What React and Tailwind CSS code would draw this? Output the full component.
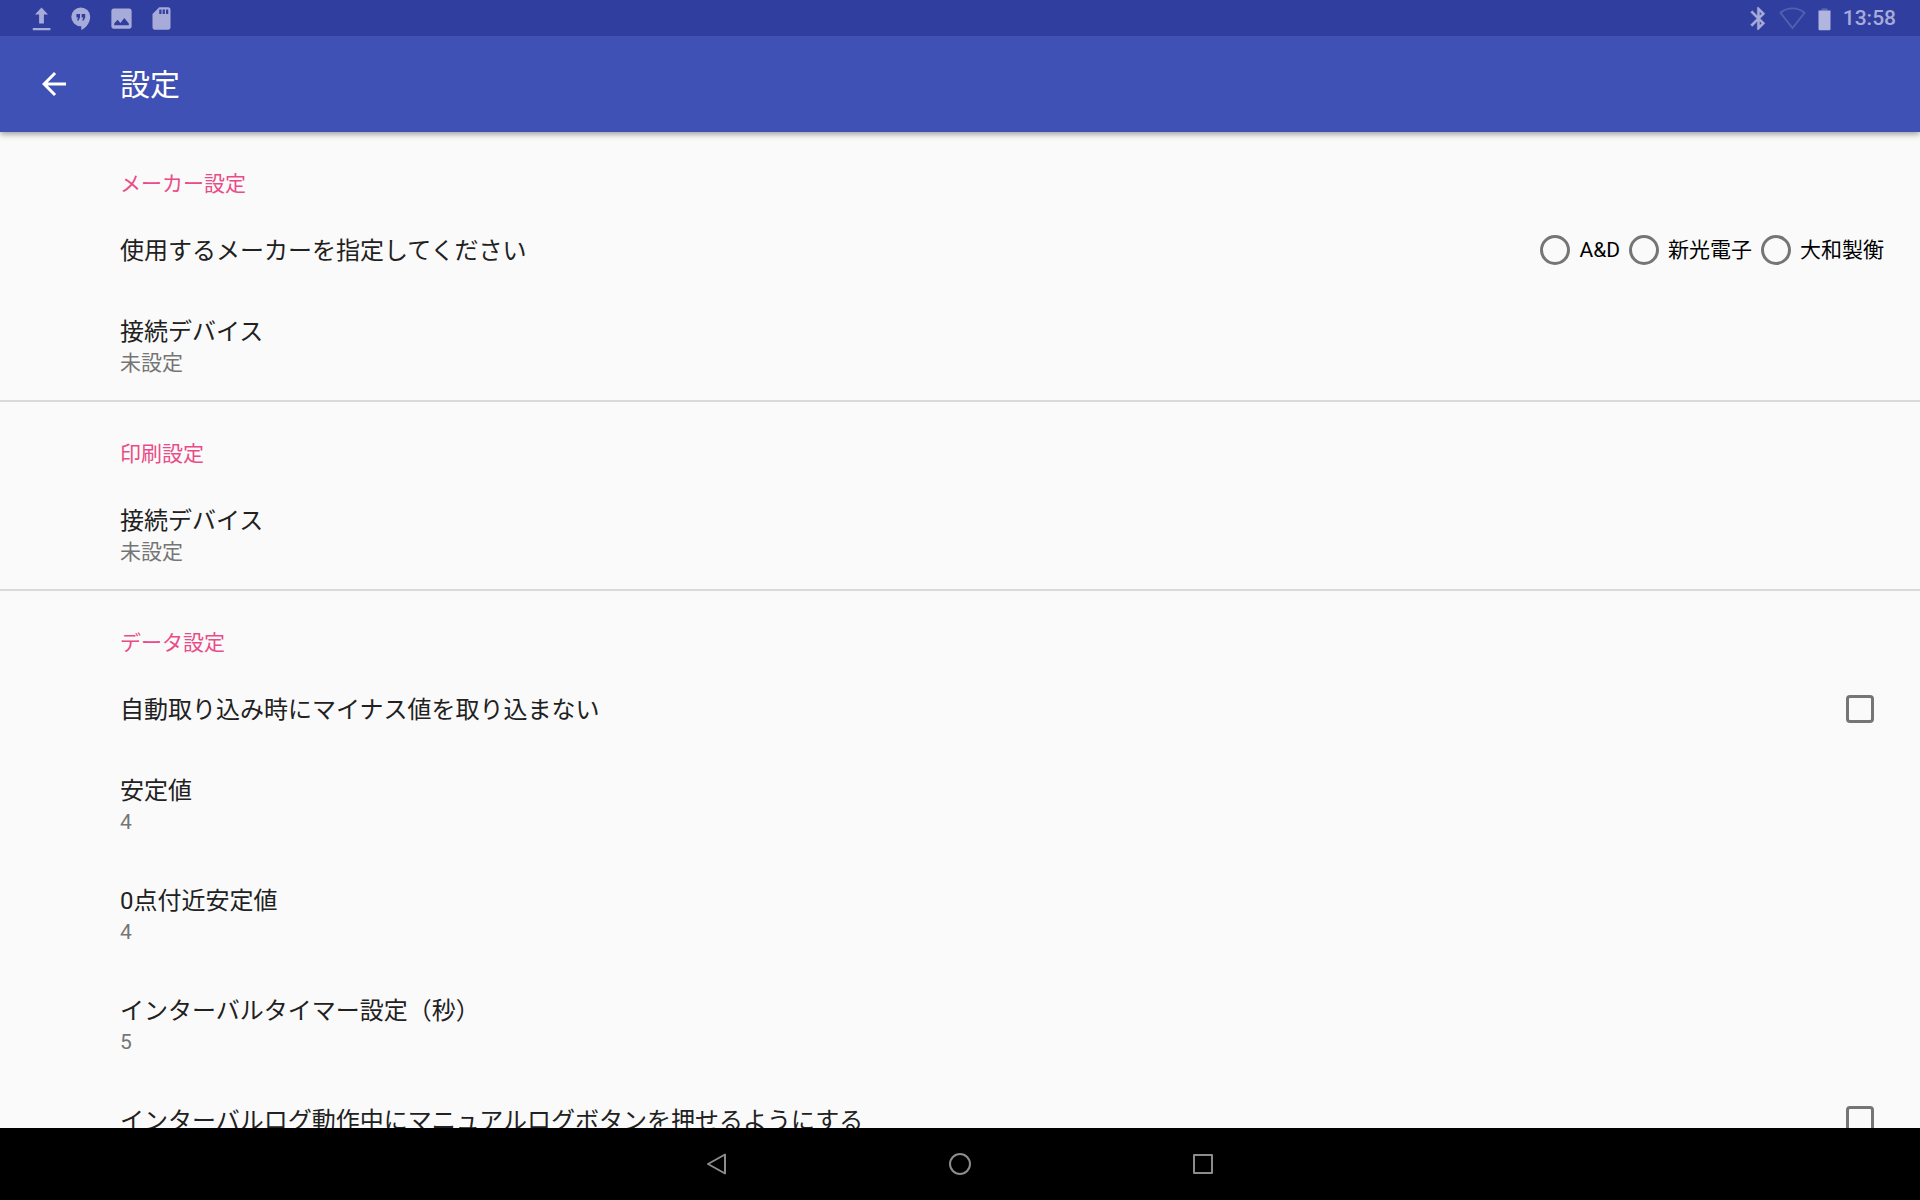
import { useState } from "react";

const UploadIcon = () => (
  <svg viewBox="0 0 27 27" className="size-[27px]" fill="currentColor">
    <path d="M13.5 2.5 20 9.4h-4.1v9.1h-4.8V9.4H7zM4.8 23h17.6v2.3H4.8z" />
  </svg>
);
const HangoutsIcon = () => (
  <svg viewBox="0 0 27 27" className="size-[27px]" fill="currentColor" fillRule="evenodd">
    <path d="M12.700 2.400a9.400 9.400 0 0 0 0 18.800h.6v3.900c5.200-2.500 8.900-7.900 8.900-13.300a9.400 9.400 0 0 0-9.500-9.400zM8.400 8.900h3.600v3.700l-1.500 3H9l1.100-3H8.400zm5.200 0h3.600v3.700l-1.500 3h-1.500l1.100-3h-1.700z" />
  </svg>
);
const ImageIcon = () => (
  <svg viewBox="0 0 24 24" className="size-[27px]" fill="currentColor">
    <path d="M21 19V5c0-1.100-.9-2-2-2H5c-1.100 0-2 .9-2 2v14c0 1.100.9 2 2 2h14c1.100 0 2-.9 2-2zM5.500 18v-1.500l3-3.500 2.500 3 3.500-4.500 4 5V18z" />
  </svg>
);
const SdCardIcon = () => (
  <svg viewBox="0 0 24 24" className="size-[27px]" fill="currentColor">
    <path d="M18 2h-8L4 8v12c0 1.100.9 2 2 2h12c1.100 0 2-.9 2-2V4c0-1.100-.9-2-2-2zm-6 6h-2V4h2v4zm3 0h-2V4h2v4zm3 0h-2V4h2v4z" />
  </svg>
);
const BluetoothIcon = () => (
  <svg viewBox="0 0 24 24" className="size-[27px]" fill="currentColor" stroke="currentColor" strokeWidth="0.400">
    <path d="M17.710 7.710L12 2h-1v7.590L6.410 5 5 6.410 10.590 12 5 17.590 6.410 19 11 14.410V22h1l5.710-5.710-4.300-4.290 4.300-4.290zM13 5.830l1.880 1.880L13 9.590V5.830zm1.880 10.460L13 18.170v-3.760l1.880 1.880z" />
  </svg>
);
const WifiIcon = () => (
  <svg viewBox="0 0 27 27" className="size-[27px]" fill="none" stroke="currentColor" strokeWidth="1.800">
    <path d="M1.500 7.800C8.500 1.900 18.500 1.900 25.500 7.800L13.500 23z" />
  </svg>
);
const BatteryIcon = () => (
  <svg viewBox="0 0 27 27" className="size-[27px]" fill="currentColor">
    <path d="M10.500 3.500h6v2h-6z" opacity="0.350" />
    <path d="M7.500 5.500h12v18.500a1.200 1.200 0 0 1-1.200 1.200H8.700a1.200 1.200 0 0 1-1.200-1.200z" />
  </svg>
);

function StatusBar() {
  return (
    <div className="z-20 flex h-9 shrink-0 items-center justify-between bg-[#303f9f] pr-6 pl-7 text-[#a6abd9]">
      <div className="flex gap-[13px]">
        <UploadIcon />
        <HangoutsIcon />
        <ImageIcon />
        <SdCardIcon />
      </div>
      <div className="flex items-center">
        <BluetoothIcon />
        <span className="ml-[7px] text-[#5260af]">
          <WifiIcon />
        </span>
        <span className="ml-[5px] text-[#b1b6de]">
          <BatteryIcon />
        </span>
        <span className="ml-[5px] text-[21px] leading-9 font-medium">13:58</span>
      </div>
    </div>
  );
}

function AppBar() {
  return (
    <header className="z-10 flex h-24 shrink-0 items-center bg-[#3f51b5] pl-9 text-white shadow-[0_2px_6px_rgba(0,0,0,0.4)]">
      <button type="button" aria-label="戻る" className="w-[84px]">
        <svg viewBox="0 0 24 24" className="size-9" fill="currentColor">
          <path d="M20 11H7.830l5.590-5.590L12 4l-8 8 8 8 1.410-1.410L7.830 13H20v-2z" />
        </svg>
      </button>
      <h1 className="pt-0.5 text-[30px] leading-9">設定</h1>
    </header>
  );
}

function Section({ title, children }) {
  return (
    <section className="border-b-2 border-[#dadada]">
      <h2 className="pt-[37px] pb-2.5 pl-[120px] text-[21px] leading-[30px] text-[#e94c87]">{title}</h2>
      {children}
    </section>
  );
}

function ValueRow({ title, value }) {
  return (
    <button type="button" className="block w-full pt-[26px] pb-[22px] pl-[120px] text-left">
      <span className="block text-2xl leading-8 text-[#212121]">{title}</span>
      <span className="block text-[21px] leading-[30px] text-[#757575]">{value}</span>
    </button>
  );
}

function CheckRow({ title }) {
  return (
    <label className="flex h-[81px] items-center justify-between pr-[46px] pl-[120px]">
      <span className="pt-0.5 text-2xl leading-8 text-[#212121]">{title}</span>
      <input type="checkbox" className="size-7 appearance-none rounded-[4px] border-3 border-[#757575] checked:bg-[#e94c87]" />
    </label>
  );
}

const MAKERS = ["A&D", "新光電子", "大和製衡"];

function MakerRow() {
  const [maker, setMaker] = useState(null);
  return (
    <fieldset className="flex h-[81px] items-center justify-between pr-9 pl-[120px]">
      <span className="pt-0.5 text-2xl leading-8 text-[#212121]">使用するメーカーを指定してください</span>
      <div className="flex gap-[9px]">
        {MAKERS.map((name) => (
          <label key={name} className="flex items-center gap-[9px] text-[21px] leading-[30px] text-black">
            <input
              type="radio"
              name="maker"
              checked={maker === name}
              onChange={() => setMaker(name)}
              className="size-[30px] appearance-none rounded-full border-3 border-[#757575] checked:border-[9px]"
            />
            {name}
          </label>
        ))}
      </div>
    </fieldset>
  );
}

function NavBar() {
  const button = "flex h-full w-[243px] items-center justify-center";
  return (
    <nav className="flex h-18 shrink-0 justify-center bg-black text-[#8c8c8c]">
      <button type="button" aria-label="戻る" className={button}>
        <svg viewBox="0 0 24 24" className="size-6" fill="none" stroke="currentColor" strokeWidth="2" strokeLinejoin="round">
          <path d="M20 2.500v19L3 12z" />
        </svg>
      </button>
      <button type="button" aria-label="ホーム" className={button}>
        <svg viewBox="0 0 24 24" className="size-6" fill="none" stroke="currentColor" strokeWidth="2">
          <circle cx="12" cy="12" r="10" />
        </svg>
      </button>
      <button type="button" aria-label="履歴" className={button}>
        <svg viewBox="0 0 24 24" className="size-6" fill="none" stroke="currentColor" strokeWidth="2" strokeLinejoin="round">
          <path d="M3 3h18v18H3z" />
        </svg>
      </button>
    </nav>
  );
}

export default function App() {
  return (
    <div lang="ja" className="flex h-screen flex-col bg-[#fafafa] font-['Roboto','Noto_Sans_CJK_JP',sans-serif]">
      <StatusBar />
      <AppBar />
      <main className="min-h-0 flex-1 overflow-y-auto [scrollbar-width:none]">
        <Section title="メーカー設定">
          <MakerRow />
          <ValueRow title="接続デバイス" value="未設定" />
        </Section>
        <Section title="印刷設定">
          <ValueRow title="接続デバイス" value="未設定" />
        </Section>
        <Section title="データ設定">
          <CheckRow title="自動取り込み時にマイナス値を取り込まない" />
          <ValueRow title="安定値" value="4" />
          <ValueRow title="0点付近安定値" value="4" />
          <ValueRow title="インターバルタイマー設定（秒）" value="5" />
          <CheckRow title="インターバルログ動作中にマニュアルログボタンを押せるようにする" />
        </Section>
      </main>
      <NavBar />
    </div>
  );
}
